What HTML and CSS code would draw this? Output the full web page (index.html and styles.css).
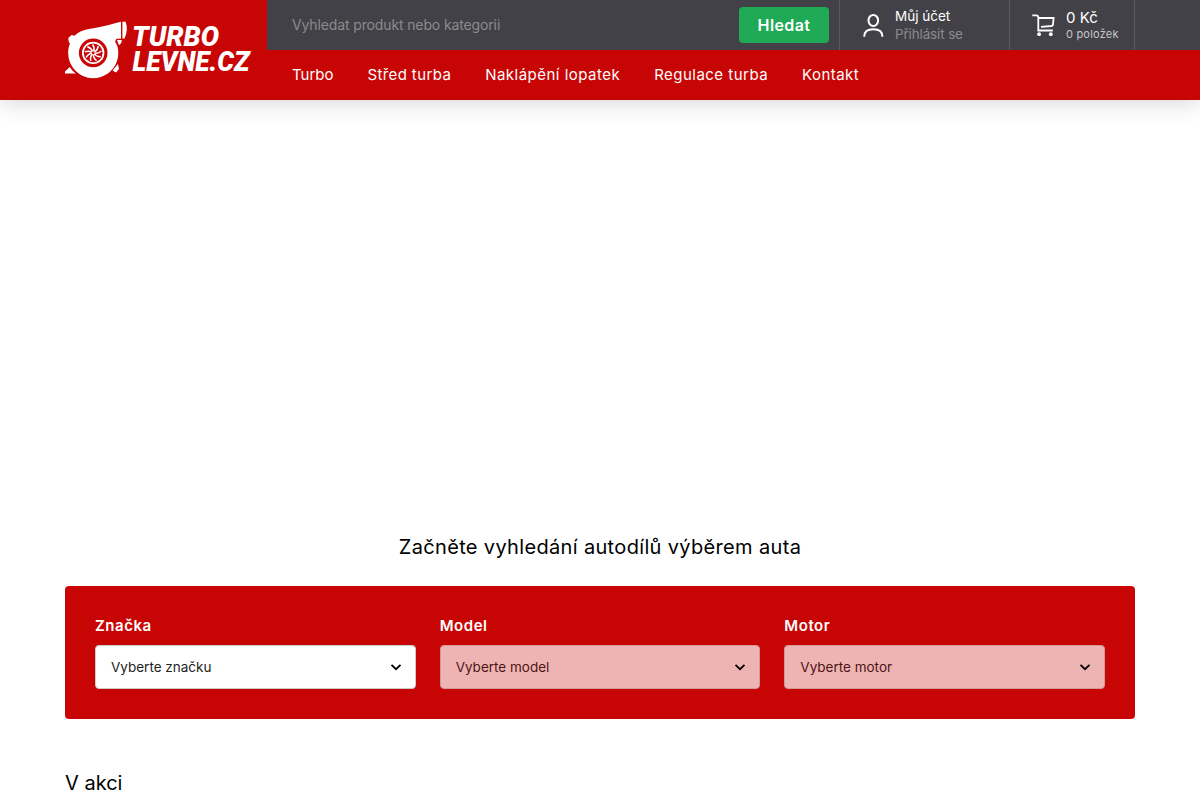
FILE: index.html
```html
<!DOCTYPE html>
<html lang="cs">

<head>
    <meta charset="UTF-8" />
    <meta name="viewport" content="width=device-width, initial-scale=1.0" />
    <title>Turbolevne.cz</title>
    <link rel="stylesheet" href="styles.css">
</head>

<body>
    <header class="header">
        <a href="#" class="logo" aria-label="Turbolevne.cz">
            <svg width="190" height="60" viewBox="64 20 190 60">
                <g fill="#fff">
                    <path d="M68.300 38 L71.500 35 L74.500 35.800 C79 31 86 29.300 95 28 C105 26.500 113 23.500 121 21.800 V38.800 H116.500 L115 41.500 C117.500 45 118.300 49 118.300 53 A25 25 0 0 1 71 64.500 C67.500 58 67.300 49 70 43.500 L68.800 42 Z" />
                    <path d="M122.400 21.800 H125.600 C127.600 27 127.200 33 124.500 38.500 H122.400 Z" />
                    <path d="M117 40 H121.800 L121.300 43 L119 45.300 Z" />
                    <path d="M118 64 L119 69 L116 72.500 L112.500 70.500 Z" />
                    <path d="M69.800 67 C71.500 70 73.500 71.700 76 73.500 H65 V71.500 Z" />
                </g>
                <circle cx="93.200" cy="52.900" r="14.300" fill="#c80505" />
                <circle cx="93.200" cy="52.900" r="11.200" fill="#fff" />
                <circle cx="93.200" cy="52.900" r="9.400" fill="#c80505" />
                <g fill="none" stroke="#fff" stroke-width="1.500">
                    <path id="blade" d="M93.500 51.500 Q95 48 92.700 44.500" />
                    <use href="#blade" transform="rotate(40 93.200 52.900)" />
                    <use href="#blade" transform="rotate(80 93.200 52.900)" />
                    <use href="#blade" transform="rotate(120 93.200 52.900)" />
                    <use href="#blade" transform="rotate(160 93.200 52.900)" />
                    <use href="#blade" transform="rotate(200 93.200 52.900)" />
                    <use href="#blade" transform="rotate(240 93.200 52.900)" />
                    <use href="#blade" transform="rotate(280 93.200 52.900)" />
                    <use href="#blade" transform="rotate(320 93.200 52.900)" />
                </g>
                <text class="logo-text" x="132" y="46" textLength="87" lengthAdjust="spacingAndGlyphs">TURBO</text>
                <text class="logo-text" x="132.500" y="71" textLength="117" lengthAdjust="spacingAndGlyphs">LEVNE.CZ</text>
            </svg>
        </a>
        <div class="header-main">
            <div class="topbar">
                <form class="search">
                    <input type="text" class="search-input" placeholder="Vyhledat produkt nebo kategorii">
                    <button type="button" class="search-button">Hledat</button>
                </form>
                <a href="#" class="account">
                    <svg width="22" height="24" viewBox="0 0 22 24" fill="none" stroke="#fff" stroke-width="2">
                        <ellipse cx="11.300" cy="7.400" rx="4.800" ry="5.500" />
                        <path d="M2.200 23.700 C2.200 19 5.500 16.300 11.300 16.300 S20.400 19 20.400 23.700" />
                    </svg>
                    <span class="account-text">
                        <span class="account-title">Můj účet</span>
                        <span class="account-login">Přihlásit se</span>
                    </span>
                </a>
                <a href="#" class="cart">
                    <svg width="24" height="24" viewBox="0 0 24 24" fill="none" stroke="#fff" stroke-width="1.800">
                        <path d="M0.300 2.300 H4.300 Q6.300 2.300 6.300 4.300 V17.500 H20.800" />
                        <path d="M6.300 5 H21.600 L21 11.500 Q20.800 12.800 19.500 13 L9 13.800" />
                        <circle cx="7.100" cy="21.200" r="1.900" fill="#fff" stroke="none" />
                        <circle cx="18.800" cy="21.200" r="1.900" fill="#fff" stroke="none" />
                    </svg>
                    <span class="cart-text">
                        <span class="cart-price">0 Kč</span>
                        <span class="cart-count">0 položek</span>
                    </span>
                </a>
            </div>
            <nav class="menu">
                <a href="#" class="menu-turbo">Turbo</a>
                <a href="#" class="menu-center">Střed turba</a>
                <a href="#" class="menu-vanes">Naklápění lopatek</a>
                <a href="#" class="menu-control">Regulace turba</a>
                <a href="#" class="menu-contact">Kontakt</a>
            </nav>
        </div>
    </header>

    <main class="container">
        <div class="banner"></div>
        <h2 class="filter-title">Začněte vyhledání autodílů výběrem auta</h2>
        <div class="filter">
            <div class="field">
                <span class="field-label">Značka</span>
                <div class="select">
                    <span>Vyberte značku</span>
                    <svg width="12" height="8" viewBox="0 0 12 8"><path d="M1.500 1.800 L6 6.200 L10.500 1.800" /></svg>
                </div>
            </div>
            <div class="field">
                <span class="field-label">Model</span>
                <div class="select disabled">
                    <span>Vyberte model</span>
                    <svg width="12" height="8" viewBox="0 0 12 8"><path d="M1.500 1.800 L6 6.200 L10.500 1.800" /></svg>
                </div>
            </div>
            <div class="field">
                <span class="field-label">Motor</span>
                <div class="select disabled">
                    <span>Vyberte motor</span>
                    <svg width="12" height="8" viewBox="0 0 12 8"><path d="M1.500 1.800 L6 6.200 L10.500 1.800" /></svg>
                </div>
            </div>
        </div>
        <h2 class="section-title">V akci</h2>
    </main>
</body>

</html>
```
FILE: styles.css
```css
* {
    box-sizing: border-box;
}

body {
    margin: 0;
    height: 800px;
    overflow: hidden;
    font-family: Inter, "Liberation Sans", sans-serif;
    font-size: 14px;
    color: #000;
    background: #fff;
}

a {
    color: inherit;
    text-decoration: none;
}

svg {
    display: block;
    flex: none;
}

.header {
    display: flex;
    height: 100px;
    padding-left: 64px;
    background: #c80505;
    color: #fff;
    box-shadow: 0 0 25px rgba(0, 0, 0, 0.2);
}

.logo {
    width: 203px;
    padding-top: 20px;
}

.logo-text {
    font-family: Roboto, sans-serif;
    font-size: 27px;
    font-weight: 900;
    font-style: italic;
    fill: #fff;
}

.header-main {
    flex: 1;
}

.topbar {
    display: flex;
    height: 50px;
    background: #424147;
}

.search {
    display: flex;
    align-items: center;
    width: 572px;
    padding: 0 10px 0 25px;
}

.search-input {
    flex: 1;
    padding: 0 0 1px;
    border: 0;
    outline: 0;
    background: none;
    font: inherit;
    color: #fff;
}

.search-input::placeholder {
    color: #8b8a8d;
    letter-spacing: -0.130px;
}

.search-button {
    width: 90px;
    height: 36px;
    padding: 0;
    border: 0;
    border-radius: 4px;
    background: #20aa55;
    color: #fff;
    font: 600 16px Inter, sans-serif;
    letter-spacing: 0.400px;
}

.account,
.cart {
    display: flex;
    align-items: center;
    border-left: 1px solid #5b5a5f;
}

.account {
    width: 170px;
    padding-left: 22px;
    gap: 11px;
}

.cart {
    width: 126px;
    padding-left: 22px;
    gap: 10px;
    border-right: 1px solid #5b5a5f;
}

.account-text,
.cart-text {
    display: flex;
    flex-direction: column;
    white-space: nowrap;
}

.account-text {
    line-height: 18px;
}

.account-title {
    font-size: 13.500px;
}

.account-login {
    font-size: 13.500px;
    color: #8b8a8d;
    letter-spacing: -0.150px;
}

.cart-price {
    font-size: 15px;
    line-height: 17px;
}

.cart-count {
    font-size: 11px;
    line-height: 16px;
    color: #c6c6c8;
    letter-spacing: 0.200px;
}

.menu {
    display: flex;
    align-items: center;
    height: 50px;
    padding: 0 0 2px 25px;
    gap: 34px;
    font-size: 15px;
    white-space: nowrap;
}

.menu-center {
    letter-spacing: 0.380px;
}

.menu-vanes {
    letter-spacing: 0.480px;
}

.menu-control {
    letter-spacing: 0.480px;
}

.menu-contact {
    letter-spacing: 0.450px;
}

.container {
    width: 1070px;
    margin: 0 auto;
}

.banner {
    height: 432px;
}

.filter-title,
.section-title {
    margin: 0;
    font-size: 20px;
    font-weight: 400;
    line-height: 30px;
}

.filter-title {
    text-align: center;
    letter-spacing: 0.340px;
}

.filter {
    display: grid;
    grid-template-columns: repeat(3, 1fr);
    gap: 24px;
    height: 133px;
    margin: 24px 0 49px;
    padding: 30px;
    border-radius: 4px;
    background: #c80505;
}

.field-label {
    display: block;
    height: 29px;
    color: #fff;
    font-size: 15px;
    font-weight: 600;
    line-height: 20px;
    letter-spacing: 0.550px;
}

.select {
    display: flex;
    align-items: center;
    justify-content: space-between;
    height: 44px;
    padding: 0 13px 0 15px;
    border: 1px solid #ccc;
    border-radius: 4px;
    background: #fff;
    color: #222;
    font-size: 13.500px;
}

.select path {
    fill: none;
    stroke: #000;
    stroke-width: 1.800;
}

.select.disabled {
    border-color: #cf9a9a;
    background: #eeb4b4;
    color: #4d1414;
}
```
